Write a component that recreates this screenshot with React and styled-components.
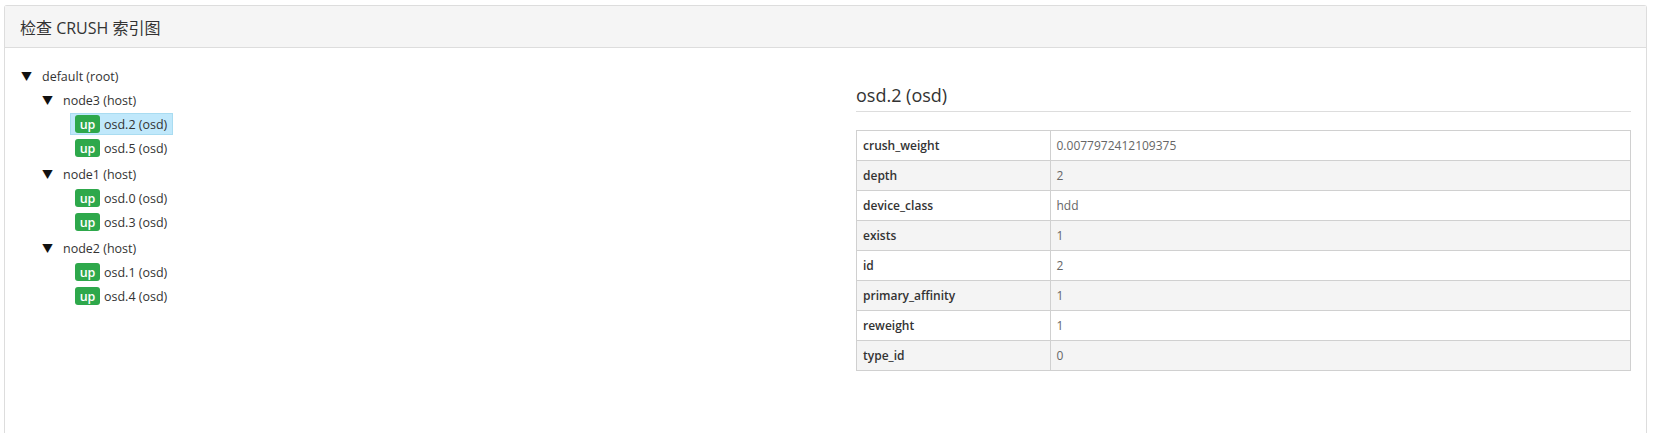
import React from "react";
import styled, { createGlobalStyle } from "styled-components";

const GlobalStyle = createGlobalStyle`
  html, body {
    margin: 0;
    padding: 0;
    background: #fff;
    overflow: hidden;
  }
  body {
    font-family: "Open Sans", "Noto Sans CJK SC", sans-serif;
    color: #333;
  }
`;

const Panel = styled.div`
  margin: 5px 6px 0 4px;
  min-height: 440px;
  border: 1px solid #ddd;
  border-bottom: none;
  border-radius: 3px 3px 0 0;
`;

const PanelHeader = styled.div`
  height: 41px;
  display: flex;
  align-items: center;
  padding: 0 15px;
  background: #f5f5f5;
  border-bottom: 1px solid #ddd;
  font-size: 16px;
  color: #333;
`;

const PanelBody = styled.div`
  display: grid;
  grid-template-columns: 1fr 1fr;
  column-gap: 60px;
  padding: 16px 15px 0 16px;
`;

const Tree = styled.div`
  font-size: 12.5px;
  color: #333;
`;

const Group = styled.div`
  padding-left: ${(p) => p.$indent || 0}px;
  margin-bottom: ${(p) => p.$gap || 0}px;
`;

const Row = styled.div`
  height: 24px;
  display: flex;
  align-items: center;
`;

const Caret = styled.span`
  width: 21px;
  font-size: 11px;
  line-height: 1;
  color: #111;
`;

const Leaf = styled.div`
  margin-left: 28px;
  height: 22px;
  display: inline-flex;
  align-items: center;
  gap: 4px;
  padding: 0 5px 0 4px;
  box-sizing: border-box;
  border: 1px solid ${(p) => (p.$active ? "#a9dcf1" : "transparent")};
  background: ${(p) => (p.$active ? "#c0e8fb" : "transparent")};
`;

const Badge = styled.span`
  display: inline-flex;
  align-items: center;
  justify-content: center;
  width: 25px;
  height: 18px;
  border-radius: 3px;
  background: #2ea84b;
  color: #fff;
  font-size: 12.5px;
  font-weight: 600;
`;

const Detail = styled.div`
  padding-top: 20px;
`;

const DetailTitle = styled.div`
  font-size: 18px;
  line-height: 23px;
  color: #333;
  padding-bottom: 4px;
  border-bottom: 1px solid #ddd;
`;

const Table = styled.table`
  width: 100%;
  margin-top: 18px;
  border-collapse: collapse;
  font-size: 12px;
`;

const Tr = styled.tr`
  background: ${(p) => (p.$striped ? "#f4f4f4" : "#fff")};
`;

const Key = styled.td`
  width: 25%;
  height: 29px;
  padding: 0 6px;
  border: 1px solid #d0d0d0;
  color: #333;
  font-weight: 600;
`;

const Value = styled.td`
  padding: 0 6px;
  border: 1px solid #d0d0d0;
  color: #666;
`;

const hosts = [
  { name: "node3", osds: ["osd.2", "osd.5"] },
  { name: "node1", osds: ["osd.0", "osd.3"] },
  { name: "node2", osds: ["osd.1", "osd.4"] },
];

const details = [
  ["crush_weight", "0.0077972412109375"],
  ["depth", "2"],
  ["device_class", "hdd"],
  ["exists", "1"],
  ["id", "2"],
  ["primary_affinity", "1"],
  ["reweight", "1"],
  ["type_id", "0"],
];

export default function App() {
  return (
    <>
      <GlobalStyle />
      <Panel>
        <PanelHeader>检查 CRUSH 索引图</PanelHeader>
        <PanelBody>
          <Tree>
            <Row>
              <Caret>▼</Caret>
              default (root)
            </Row>
            <Group $indent={21}>
              {hosts.map((h) => (
                <Group key={h.name} $gap={2}>
                  <Row>
                    <Caret>▼</Caret>
                    {h.name} (host)
                  </Row>
                  {h.osds.map((o) => (
                    <Row key={o}>
                      <Leaf $active={o === "osd.2"}>
                        <Badge>up</Badge>
                        {o} (osd)
                      </Leaf>
                    </Row>
                  ))}
                </Group>
              ))}
            </Group>
          </Tree>
          <Detail>
            <DetailTitle>osd.2 (osd)</DetailTitle>
            <Table>
              <tbody>
                {details.map(([k, v], i) => (
                  <Tr key={k} $striped={i % 2 === 1}>
                    <Key>{k}</Key>
                    <Value>{v}</Value>
                  </Tr>
                ))}
              </tbody>
            </Table>
          </Detail>
        </PanelBody>
      </Panel>
    </>
  );
}
